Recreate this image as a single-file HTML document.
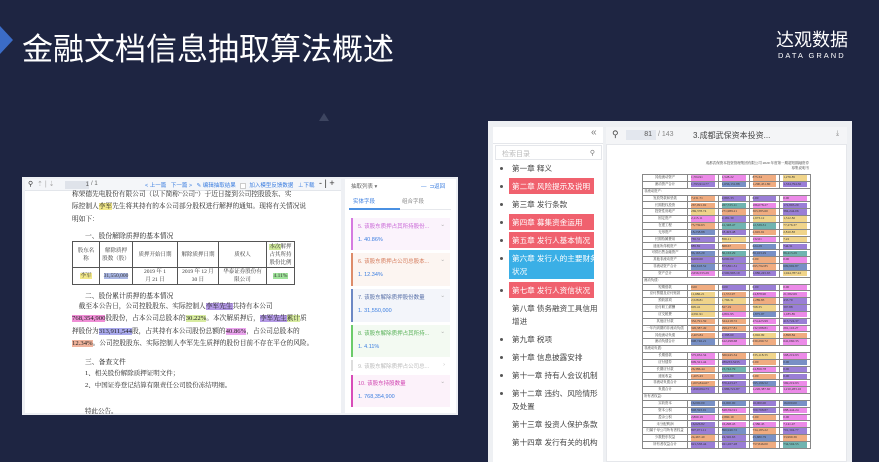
<!DOCTYPE html>
<html><head><meta charset="utf-8">
<style>
*{margin:0;padding:0;box-sizing:border-box}
body{width:879px;height:462px;background:#1e2542;position:relative;overflow:hidden;font-family:"Liberation Sans","Noto Sans CJK SC",sans-serif}
.a{position:absolute;white-space:nowrap}
.ser{font-family:"Liberation Serif","Noto Serif CJK SC",serif}
table.t{border-collapse:collapse;position:absolute;table-layout:fixed}
.dt td{border:1px solid #555;text-align:center;font-size:5.5px;color:#333;line-height:8px;overflow:hidden}
.toc{position:absolute;left:512px;font-size:7.6px;color:#444;line-height:13px;white-space:nowrap}
.dot{position:absolute;left:500px;width:3px;height:3px;background:#555;border-radius:50%}
.red{background:#f0616e;color:#fff}
.card{position:absolute;left:351px;width:99px;font-size:5.5px;white-space:nowrap;overflow:hidden}
.ft td{height:6.85px;font-size:3.4px;color:#333;border:0.6px solid #888;padding:0 1px;line-height:5.6px;white-space:nowrap;overflow:hidden}
.ft td.l{text-align:center}
.ft td i{font-style:normal;display:block;margin:0 2px;height:5.4px}
.p{background:#ec8ae8}.u{background:#9a7ed6}.o{background:#f0ac80}.y{background:#f0d48a}.b{background:#7890c6}.g{background:#70b4b0}
.doc{position:absolute;left:72px;width:224px;font-size:6.7px;color:#222;line-height:12.3px;white-space:nowrap}
</style></head><body>
<div class="a" style="left:0;top:26px;width:0;height:0;border-top:14px solid transparent;border-bottom:14px solid transparent;border-left:13px solid #3b6cc7"></div>
<div class="a" style="left:22px;top:24px;font-size:31px;color:#fff;font-family:'Noto Sans CJK SC',sans-serif">金融文档信息抽取算法概述</div>
<div class="a" style="left:776px;top:26px;font-size:18px;color:#fff;font-family:'Noto Sans CJK SC',sans-serif">达观数据</div>
<div class="a" style="left:778px;top:51px;font-size:7.5px;color:#fff;letter-spacing:2px">DATA GRAND</div>
<div class="a" style="left:319px;top:113px;width:0;height:0;border-left:5px solid transparent;border-right:5px solid transparent;border-bottom:8px solid #3d4560"></div>

<div class="a" style="left:22px;top:177px;width:436px;height:238px;background:#eef0f4"></div>
<div class="a" style="left:25px;top:179px;width:316px;height:234px;background:#fff;overflow:hidden"></div>
<div class="a" style="left:25px;top:179px;width:316px;height:12px;background:#f4f6f9;border-bottom:1px solid #e3e6eb"></div>
<div class="a" style="left:28px;top:180px;font-size:7px;color:#333">⚲&nbsp; <span style="color:#aaa">⇡ | ⇣</span></div>
<div class="a" style="left:65px;top:181px;width:24px;height:8px;background:#dfe3ea;font-size:6px;text-align:right;color:#555;line-height:8px">1</div>
<div class="a" style="left:91px;top:181px;font-size:6px;color:#666">/ 1</div>
<div class="a" style="left:145px;top:181px;font-size:5.5px;color:#3b7ee0">&lt; 上一篇 &nbsp; 下一篇 &gt; &nbsp; ✎ 编辑抽取结果 &nbsp; <span style="display:inline-block;width:6px;height:6px;border:1px solid #ccc;background:#fff;vertical-align:middle"></span> &nbsp;加入模型反馈数据 &nbsp; ⊥下载</div>
<div class="a" style="left:319px;top:178px;font-size:9px;color:#333">- | +</div>

<div class="doc ser" style="top:189px">
<div>称荣德先电股份有限公司（以下简称"公司"）于近日接到公司控股股东、实</div>
<div>际控制人<span style="background:#f2e88a">李军</span>先生将其持有的本公司部分股权进行解押的通知。现将有关情况说</div>
<div>明如下：</div>
</div>
<div class="a ser" style="left:85px;top:230px;font-size:6.8px;color:#222">一、股份解除质押的基本情况</div>
<table class="t dt ser" style="left:72px;top:241px;width:222px">
<colgroup><col style="width:27px"><col style="width:33px"><col style="width:45px"><col style="width:41px"><col style="width:48px"><col style="width:28px"></colgroup>
<tr style="height:26px"><td>股东名<br>称</td><td>解除质押<br>股数（股）</td><td>质押开始日期</td><td>解除质押日期</td><td>质权人</td><td><span style="background:#cfe89a">本次</span>解押<br>占其所持<br>股份比例</td></tr>
<tr style="height:16px"><td><span style="background:#f2e88a">李军</span></td><td><span style="background:#a9b6e3">31,550,000</span></td><td>2019 年 1<br>月 21 日</td><td>2019 年 12 月<br>30 日</td><td>华泰证券股份有<br>限公司</td><td><span style="background:#9fe39a">4.11%</span></td></tr>
</table>
<div class="a ser" style="left:85px;top:290px;font-size:6.8px;color:#222">二、股份累计质押的基本情况</div>
<div class="doc ser" style="top:301px;line-height:12.4px">
<div>&nbsp;&nbsp;&nbsp;&nbsp;截至本公告日，公司控股股东、实际控制人<span style="background:#b49ae6">李军先生</span>共持有本公司</div>
<div><span style="background:#f08fd6">768,354,900</span>股股份，占本公司总股本的<span style="background:#d8eca0">30.22%</span>。本次解质押后，<span style="background:#b49ae6">李军先生</span><span style="background:#d8eca0">累计</span>质</div>
<div>押股份为<span style="background:#a9a9ec">313,911,544</span>股，占其持有本公司股份总额的<span style="background:#eba4ee">40.86%</span>，占公司总股本的</div>
<div><span style="background:#f0b39c">12.34%</span>。公司控股股东、实际控制人李军先生质押的股份目前不存在平仓的风险。</div>
</div>
<div class="a ser" style="left:85px;top:356px;font-size:6.8px;color:#222">三、备查文件</div>
<div class="a ser" style="left:85px;top:368px;font-size:6.5px;color:#222">1、相关股份解除质押证明文件；</div>
<div class="a ser" style="left:85px;top:380px;font-size:6.5px;color:#222">2、中国证券登记结算有限责任公司股份冻结明细。</div>
<div class="a ser" style="left:85px;top:406px;font-size:6.5px;color:#222">特此公告。</div>

<div class="a" style="left:345px;top:179px;width:111px;height:234px;background:#fff"></div>
<div class="a" style="left:351px;top:182px;font-size:5.5px;color:#666">抽取列表 ▾</div>
<div class="a" style="left:421px;top:182px;font-size:5.5px;color:#3b7ee0">— &nbsp;⊐返回</div>
<div class="a" style="left:353px;top:197px;font-size:5.5px;color:#3b7ee0">实体字段</div>
<div class="a" style="left:402px;top:197px;font-size:5.5px;color:#888">组合字段</div>
<div class="a" style="left:349px;top:209px;width:102px;height:1px;background:#e6e8ec"></div>
<div class="a" style="left:349px;top:208px;width:51px;height:2px;background:#4a90e2"></div>

<div class="card" style="top:218px;height:32px;background:#fbf3fc;border-left:2px solid #d57ae0"><div style="padding:4px 5px;color:#c967d6">5. 该股东质押占其所持股份... <span style="float:right;color:#aaa">⌄</span></div><div style="padding:3px 5px;color:#3b7ee0">1. 40.86%</div></div>
<div class="card" style="top:253px;height:33px;background:#fcf5f1;border-left:2px solid #dd8c6a"><div style="padding:4px 5px;color:#d57c5c">6. 该股东质押占公司总股本... <span style="float:right;color:#aaa">⌄</span></div><div style="padding:3px 5px;color:#3b7ee0">1. 12.34%</div></div>
<div class="card" style="top:289px;height:33px;background:#f3f5fa;border-left:2px solid #6d88c4"><div style="padding:4px 5px;color:#5870a8">7. 该股东解除质押股份数量 <span style="float:right;color:#aaa">⌄</span></div><div style="padding:3px 5px;color:#3b7ee0">1. 31,550,000</div></div>
<div class="card" style="top:325px;height:32px;background:#f3faf2;border-left:2px solid #6ccb6a"><div style="padding:4px 5px;color:#58b158">8. 该股东解除质押占其所持... <span style="float:right;color:#aaa">⌄</span></div><div style="padding:3px 5px;color:#3b7ee0">1. 4.11%</div></div>
<div class="card" style="top:360px;height:11px;background:#fff;border-left:2px solid #ddd"><div style="padding:2px 5px;color:#bbb">9. 该股东解除质押占公司总... <span style="float:right">›</span></div></div>
<div class="card" style="top:375px;height:32px;background:#fcf2fa;border-left:2px solid #d84cb8"><div style="padding:4px 5px;color:#d043b0">10. 该股东持股数量 <span style="float:right;color:#aaa">⌄</span></div><div style="padding:3px 5px;color:#3b7ee0">1. 768,354,900</div></div>

<div class="a" style="left:488px;top:121px;width:364px;height:341px;background:#eef0f3"></div>
<div class="a" style="left:493px;top:127px;width:110px;height:335px;background:#fff"></div>
<div class="a" style="left:591px;top:127px;font-size:10px;color:#777">«</div>
<div class="a" style="left:493px;top:143px;width:110px;height:1px;background:#e5e7eb"></div>
<div class="a" style="left:495px;top:145px;width:107px;height:15px;border:1px solid #e5e7eb;font-size:7px;color:#bbb;padding:3px 6px">检索目录<span style="float:right;color:#777">⚲</span></div>

<div class="dot" style="top:167px"></div><div class="toc" style="top:162px">第一章 释义</div>
<div class="dot" style="top:185px"></div><div class="a red" style="left:509px;top:178px;width:85px;height:16px"></div><div class="toc" style="top:180px;color:#fff">第二章 风险提示及说明</div>
<div class="dot" style="top:203px"></div><div class="toc" style="top:198px">第三章 发行条款</div>
<div class="dot" style="top:221px"></div><div class="a red" style="left:509px;top:214px;width:85px;height:16px"></div><div class="toc" style="top:216px;color:#fff">第四章 募集资金运用</div>
<div class="dot" style="top:239px"></div><div class="a red" style="left:509px;top:232px;width:85px;height:16px"></div><div class="toc" style="top:234px;color:#fff">第五章 发行人基本情况</div>
<div class="dot" style="top:257px"></div><div class="a" style="left:509px;top:250px;width:85px;height:29px;background:#3aafe6"></div><div class="toc" style="top:252px;color:#fff">第六章 发行人的主要财务<br>状况</div>
<div class="dot" style="top:289px"></div><div class="a red" style="left:509px;top:282px;width:85px;height:16px"></div><div class="toc" style="top:284px;color:#fff">第七章 发行人资信状况</div>
<div class="toc" style="top:302px">第八章 债务融资工具信用<br>增进</div>
<div class="dot" style="top:338px"></div><div class="toc" style="top:333px">第九章 税项</div>
<div class="dot" style="top:356px"></div><div class="toc" style="top:351px">第十章 信息披露安排</div>
<div class="dot" style="top:374px"></div><div class="toc" style="top:369px">第十一章 持有人会议机制</div>
<div class="dot" style="top:392px"></div><div class="toc" style="top:387px">第十二章 违约、风险情形<br>及处置</div>
<div class="toc" style="top:418px">第十三章 投资人保护条款</div>
<div class="toc" style="top:436px">第十四章 发行有关的机构</div>

<div class="a" style="left:606px;top:127px;width:241px;height:335px;background:#fff;border:1px solid #e5e7eb"></div>
<div class="a" style="left:606px;top:127px;width:241px;height:18px;background:#f4f5f7;border-bottom:1px solid #e5e7eb"></div>
<div class="a" style="left:612px;top:129px;font-size:9px;color:#444">⚲</div>
<div class="a" style="left:626px;top:130px;width:30px;height:10px;background:#e3e7ee;font-size:7px;color:#555;text-align:right;padding-right:4px;line-height:10px">81</div>
<div class="a" style="left:658px;top:131px;font-size:7px;color:#888">/ 143</div>
<div class="a" style="left:693px;top:130px;font-size:8px;color:#444">3.成都武保资本投资...</div>
<div class="a" style="left:836px;top:130px;font-size:7px;color:#888">⤓</div>
<div class="a ser" style="left:703px;top:161px;font-size:3.5px;color:#333;line-height:4.5px;text-align:right;width:106px">成都武保资本投资管理集团有限公司 2020 年度第一期超短期融资券<br>募集说明书</div>

<table class="t ft ser" style="left:642px;top:174px;width:169px;border:1px solid #555;background:#fff">
<colgroup><col style="width:45px"><col><col><col><col></colgroup>
<tr><td class="l">其他流动资产</td><td><i class="p">1,704.91</i></td><td><i class="p">1,528.22</i></td><td><i class="o">875.34</i></td><td><i class="y">1,276.85</i></td></tr>
<tr><td class="l">流动资产合计</td><td><i class="u">1,793,914.77</i></td><td><i class="b">1,656,131.88</i></td><td><i class="o">1,290,451.80</i></td><td><i class="u">1,334,794.36</i></td></tr>
<tr><td colspan="5" style="text-align:left">非流动资产：</td></tr>
<tr><td class="l">发放贷款和垫款</td><td><i class="o">7,231.71</i></td><td><i class="u">2,865.33</i></td><td><i class="u">0.00</i></td><td><i class="p">0.00</i></td></tr>
<tr><td class="l">长期股权投资</td><td><i class="o">267,091.92</i></td><td><i class="g">267,725.11</i></td><td><i class="p">186,078.27</i></td><td><i class="u">172,893.20</i></td></tr>
<tr><td class="l">投资性房地产</td><td><i class="y">269,378.74</i></td><td><i class="o">271,989.21</i></td><td><i class="o">363,385.60</i></td><td><i class="u">384,244.06</i></td></tr>
<tr><td class="l">固定资产</td><td><i class="p">2,115.11</i></td><td><i class="u">2,181.30</i></td><td><i class="y">1,973.12</i></td><td><i class="y">1,512.82</i></td></tr>
<tr><td class="l">在建工程</td><td><i class="o">75,739.63</i></td><td><i class="g">41,348.47</i></td><td><i class="g">12,539.31</i></td><td><i class="y">77,276.37</i></td></tr>
<tr><td class="l">无形资产</td><td><i class="b">18,238.88</i></td><td><i class="u">18,493.48</i></td><td><i class="o">2,945.91</i></td><td><i class="y">2,810.83</i></td></tr>
<tr><td class="l">长期待摊费用</td><td><i class="u">765.31</i></td><td><i class="y">856.11</i></td><td><i class="p">132.61</i></td><td><i class="y">7.22</i></td></tr>
<tr><td class="l">递延所得税资产</td><td><i class="u">885.82</i></td><td><i class="o">868.67</i></td><td><i class="b">624.29</i></td><td><i class="u">744.31</i></td></tr>
<tr><td class="l">可供出售金融资产</td><td><i class="b">86,163.29</i></td><td><i class="g">86,163.29</i></td><td><i class="b">86,163.29</i></td><td><i class="g">86,413.29</i></td></tr>
<tr><td class="l">其他非流动资产</td><td><i class="u">8,000.00</i></td><td><i class="u">8,000.00</i></td><td><i class="o">0.00</i></td><td><i class="p">0.00</i></td></tr>
<tr><td class="l">非流动资产合计</td><td><i class="b">862,618.52</i></td><td><i class="u">873,861.31</i></td><td><i class="o">695,792.85</i></td><td><i class="b">609,992.87</i></td></tr>
<tr><td class="l">资产总计</td><td><i class="p">2,656,533.29</i></td><td><i class="u">2,500,993.19</i></td><td><i class="u">1,986,245.65</i></td><td><i class="y">1,944,787.22</i></td></tr>
<tr><td colspan="5" style="text-align:left">流动负债：</td></tr>
<tr><td class="l">短期借款</td><td><i class="o">0.00</i></td><td><i class="u">0.00</i></td><td><i class="u">0.00</i></td><td><i class="p">0.00</i></td></tr>
<tr><td class="l">应付票据及应付账款</td><td><i class="y">11,686.21</i></td><td><i class="o">11,572.97</i></td><td><i class="p">24,878.90</i></td><td><i class="p">21,582.69</i></td></tr>
<tr><td class="l">预收款项</td><td><i class="y">2,528.81</i></td><td><i class="y">1,766.31</i></td><td><i class="o">1,289.83</i></td><td><i class="u">433.79</i></td></tr>
<tr><td class="l">应付职工薪酬</td><td><i class="y">605.41</i></td><td><i class="o">827.19</i></td><td><i class="y">768.35</i></td><td><i class="u">397.88</i></td></tr>
<tr><td class="l">应交税费</td><td><i class="y">4,591.91</i></td><td><i class="p">4,801.95</i></td><td><i class="b">1,875.97</i></td><td><i class="p">1,185.85</i></td></tr>
<tr><td class="l">其他应付款</td><td><i class="o">352,791.59</i></td><td><i class="o">324,218.72</i></td><td><i class="p">474,423.99</i></td><td><i class="u">413,724.37</i></td></tr>
<tr><td class="l">一年内到期的非流动负债</td><td><i class="o">326,387.49</i></td><td><i class="o">299,277.81</i></td><td><i class="p">132,588.81</i></td><td><i class="p">291,116.27</i></td></tr>
<tr><td class="l">其他流动负债</td><td><i class="o">2,403.84</i></td><td><i class="u">2,388.60</i></td><td><i class="y">3,992.99</i></td><td><i class="o">2,898.84</i></td></tr>
<tr><td class="l">流动负债合计</td><td><i class="b">698,746.21</i></td><td><i class="p">612,298.68</i></td><td><i class="o">630,290.72</i></td><td><i class="p">641,060.35</i></td></tr>
<tr><td colspan="5" style="text-align:left">非流动负债：</td></tr>
<tr><td class="l">长期借款</td><td><i class="p">575,932.34</i></td><td><i class="o">566,945.34</i></td><td><i class="y">335,118.33</i></td><td><i class="p">568,219.93</i></td></tr>
<tr><td class="l">应付债券</td><td><i class="p">609,321.44</i></td><td><i class="u">289233.3235</i></td><td><i class="o">0.00</i></td><td><i class="b">0.00</i></td></tr>
<tr><td class="l">长期应付款</td><td><i class="o">26,386.44</i></td><td><i class="g">23,742.79</i></td><td><i class="p">24,856.78</i></td><td><i class="u">0.00</i></td></tr>
<tr><td class="l">递延收益</td><td><i class="o">1,205.43</i></td><td><i class="u">1,221.89</i></td><td><i class="o">0.00</i></td><td><i class="u">0.00</i></td></tr>
<tr><td class="l">非流动负债合计</td><td><i class="o">1,003,844.67</i></td><td><i class="u">876,423.27</i></td><td><i class="b">595,196.52</i></td><td><i class="p">569,219.93</i></td></tr>
<tr><td class="l">负债合计</td><td><i class="u">1,699,094.73</i></td><td><i class="u">1,986,721.87</i></td><td><i class="p">1,226,387.60</i></td><td><i class="p">1,210,283.16</i></td></tr>
<tr><td colspan="5" style="text-align:left">所有者权益：</td></tr>
<tr><td class="l">实收资本</td><td><i class="b">16,000.00</i></td><td><i class="b">16,000.00</i></td><td><i class="u">16,000.00</i></td><td><i class="b">16,000.00</i></td></tr>
<tr><td class="l">资本公积</td><td><i class="b">848,593.91</i></td><td><i class="p">848,592.91</i></td><td><i class="u">700,768.87</i></td><td><i class="p">688,444.24</i></td></tr>
<tr><td class="l">盈余公积</td><td><i class="p">2,860.19</i></td><td><i class="o">2,860.19</i></td><td><i class="o">0.00</i></td><td><i class="p">0.00</i></td></tr>
<tr><td class="l">未分配利润</td><td><i class="u">16,626.82</i></td><td><i class="p">16,298.43</i></td><td><i class="p">2,386.45</i></td><td><i class="p">7,141.47</i></td></tr>
<tr><td class="l">归属于母公司所有者权益</td><td><i class="u">897,071.11</i></td><td><i class="b">896,946.72</i></td><td><i class="o">734,185.22</i></td><td><i class="u">701,304.77</i></td></tr>
<tr><td class="l">少数股东权益</td><td><i class="o">24,467.40</i></td><td><i class="u">24,326.63</i></td><td><i class="b">25,680.79</i></td><td><i class="o">33,999.36</i></td></tr>
<tr><td class="l">所有者权益合计</td><td><i class="u">921,538.44</i></td><td><i class="u">921,267.28</i></td><td><i class="o">757,846.00</i></td><td><i class="g">734,504.55</i></td></tr>
</table>
</body></html>
